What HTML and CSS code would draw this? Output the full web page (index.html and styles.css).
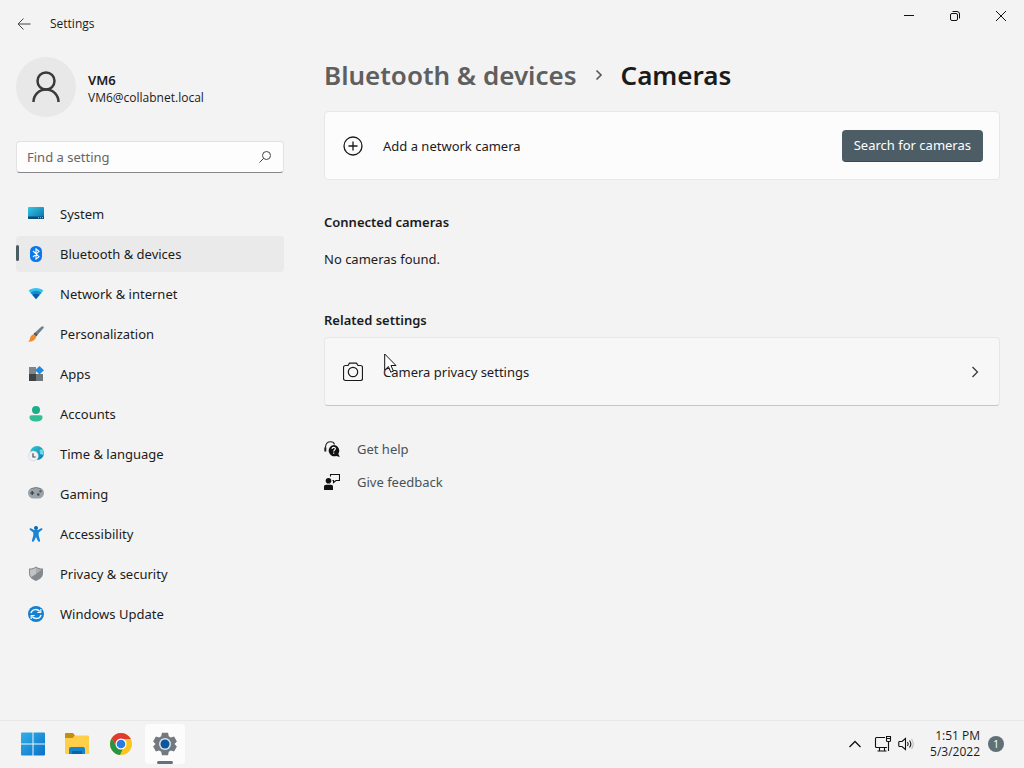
FILE: index.html
```html
<!DOCTYPE html>
<html lang="en">
<head>
  <meta charset="UTF-8" />
  <meta name="viewport" content="width=device-width, initial-scale=1.0" />
  <title>Settings</title>
  <link rel="stylesheet" href="styles.css">
</head>
<body>
  <header class="titlebar">
    <button class="back-btn" aria-label="Back">
      <svg width="14" height="14" viewBox="0 0 14 14" fill="none" stroke="#444" stroke-width="1"><path d="M13.500 7H1M6.500 1.500L1 7l5.500 5.500"/></svg>
    </button>
    <span class="app-name">Settings</span>
    <div class="window-controls">
      <button aria-label="Minimize"><svg width="12" height="12" viewBox="0 0 12 12" stroke="#111"><path d="M1 5.500h10"/></svg></button>
      <button aria-label="Restore"><svg width="12" height="12" viewBox="0 0 12 12" fill="none" stroke="#111"><rect x="1.500" y="3.500" width="7" height="7" rx="1.500"/><path d="M3.500 1.500H8a2.500 2.500 0 0 1 2.500 2.500v4.500"/></svg></button>
      <button aria-label="Close"><svg width="12" height="12" viewBox="0 0 12 12" stroke="#111"><path d="M1 1l10 10M11 1L1 11"/></svg></button>
    </div>
  </header>

  <div class="layout">
    <aside class="sidebar">
      <a class="profile" href="#">
        <span class="avatar">
          <svg width="32" height="34" viewBox="0 0 32 34" fill="none" stroke="#3a3a3a" stroke-width="2.500"><circle cx="16" cy="11" r="8.500"/><path d="M3.500 32C3.500 25 9 19.500 16 19.500S28.500 25 28.500 32"/></svg>
        </span>
        <span class="profile-text">
          <strong>VM6</strong>
          <span class="email">VM6@collabnet.local</span>
        </span>
      </a>

      <form class="search">
        <input type="search" aria-label="Find a setting" placeholder="Find a setting">
        <button type="button" aria-label="Search"><svg width="14" height="14" viewBox="0 0 14 14" fill="none" stroke="#444" stroke-width="1"><circle cx="8.500" cy="5.500" r="4"/><path d="M5.600 8.400L1.500 12.500"/></svg></button>
      </form>

      <nav class="nav">
        <a href="#">
          <svg width="16" height="16" viewBox="0 0 16 16"><defs><linearGradient id="sys" x2="1" y2="1"><stop stop-color="#34c9e2"/><stop offset="1" stop-color="#0a6cab"/></linearGradient></defs><rect y="1" width="16" height="12" rx="1" fill="url(#sys)"/><path d="M0 10.500h16V12a1 1 0 0 1-1 1H1a1 1 0 0 1-1-1z" fill="#0b4a74"/><path d="M10 11.700h1M12 11.700h1M14 11.700h1" stroke="#8ed7ec"/></svg>
          System
        </a>
        <a href="#" class="active" aria-current="page">
          <svg width="16" height="16" viewBox="0 0 16 16"><rect x="2" width="12" height="16" rx="5.500" fill="#0a78e8"/><path d="M5 5l6 5.700L8 13.200V2.800l3 2.500L5 11" fill="none" stroke="#fff" stroke-width="1.100"/></svg>
          Bluetooth &amp; devices
        </a>
        <a href="#">
          <svg width="16" height="16" viewBox="0 0 16 16"><path d="M.500 4.500C4.500 1 11.500 1 15.500 4.500L8 13z" fill="#35c3ee"/><path d="M2.500 6.700C5.500 4 10.500 4 13.500 6.700L8 13z" fill="#168bd2"/><path d="M4.500 9C6.500 7.300 9.500 7.300 11.500 9L8 13z" fill="#0b5ba8"/></svg>
          Network &amp; internet
        </a>
        <a href="#">
          <svg width="16" height="16" viewBox="0 0 16 16"><path d="M14.500.300c1 0 1.500.8 1.100 1.600L8.500 10 6 7.500 13.300.8z" fill="#6d7f8a"/><path d="M9.500 9L8 10.700 5.300 8.200 7 6.500z" fill="#4b5358"/><path d="M5.700 8.500c1.500.2 2.600 1.200 2.300 2.700-.5 3-4.200 4.700-7.900 4.400 1.700-1 1.600-2.400 2.200-4.100.5-1.700 1.800-3.100 3.400-3z" fill="#f08a2c"/></svg>
          Personalization
        </a>
        <a href="#">
          <svg width="16" height="16" viewBox="0 0 16 16"><path d="M1 1h7v7H1z" fill="#808589"/><path d="M1 8h7v7H1z" fill="#3e4346"/><path d="M8 8h7v7H8z" fill="#70767a"/><path d="M11.500 0L16 4.300 11.500 8.600 7 4.300z" fill="#218de2"/></svg>
          Apps
        </a>
        <a href="#">
          <svg width="16" height="16" viewBox="0 0 16 16"><circle cx="8" cy="4" r="4" fill="#1cae88"/><path d="M3.500 9.200h9c1.500 0 2 .8 2 2 0 3-3 4.300-6.500 4.300s-6.500-1.300-6.500-4.300c0-1.200.7-2 2-2z" fill="#32bd96"/></svg>
          Accounts
        </a>
        <a href="#">
          <svg width="16" height="16" viewBox="0 0 16 16"><defs><linearGradient id="globe" x2="1" y2="1"><stop stop-color="#35c9cf"/><stop offset="1" stop-color="#0a78b5"/></linearGradient></defs><circle cx="9" cy="7" r="7" fill="url(#globe)"/><path d="M11.500 4l2.800-1c1.400 2 1.800 4 1 6L12 8z" fill="#66dce0"/><circle cx="5.300" cy="10" r="5.300" fill="#dfe1e6"/><circle cx="5.300" cy="10" r="4.300" fill="#f2f2f5"/><path d="M5 7.200v3.800h2.700" fill="none" stroke="#4c4a53" stroke-width="1.200"/></svg>
          Time &amp; language
        </a>
        <a href="#">
          <svg width="16" height="16" viewBox="0 0 16 16"><rect y="1.500" width="16" height="11" rx="5.500" fill="#9aa2aa"/><path d="M3 3Q8 0 13 3" fill="none" stroke="#777f87"/><path d="M2.200 7h4M4.200 5v4" stroke="#35393d" stroke-width="1.200"/><circle cx="10.300" cy="8.500" r="1.200" fill="#42474c"/><circle cx="12.500" cy="5.300" r="1.200" fill="#5b6167"/></svg>
          Gaming
        </a>
        <a href="#">
          <svg width="16" height="16" viewBox="0 0 16 16"><path d="M3 2.300L6 4h4l3-1.700c1.200-.5 2 1 .9 1.800L10.700 6.500v3l1.400 4.900c.3 1.400-1.600 2-2.200.7L8 11l-1.900 4.100c-.6 1.300-2.500.7-2.200-.7l1.400-4.900v-3L2.100 4.100C1 3.300 1.800 1.800 3 2.300z" fill="#1685d6"/><circle cx="8" cy="2" r="2" fill="#0867ad"/></svg>
          Accessibility
        </a>
        <a href="#">
          <svg width="16" height="16" viewBox="0 0 16 16"><path d="M8 .500c2 1.500 4 2 7 2V7c0 4-2.500 6-7 8-4.500-2-7-4-7-8V2.500c3 0 5-.5 7-2z" fill="#85898d"/><path d="M8 1.700c2 1.200 3.700 1.700 6 1.800L8 8z" fill="#aaaeb1"/><path d="M8 1.700C6 2.900 4.300 3.400 2 3.500V7c0 1.500.4 2.900 1.300 4L8 8z" fill="#c1c4c6"/></svg>
          Privacy &amp; security
        </a>
        <a href="#">
          <svg width="16" height="16" viewBox="0 0 16 16"><circle cx="8" cy="8" r="8" fill="#1580cf"/><path d="M3 7.200C3.800 3.200 9 2.200 11.800 5.500M13 8.800c-.8 4-6 5-8.800 1.700" fill="none" stroke="#e9f7ff" stroke-width="1.400"/><path d="M12.800 3v3.500H9.300M3.200 13V9.500h3.500" fill="none" stroke="#e9f7ff" stroke-width="1.200"/></svg>
          Windows Update
        </a>
      </nav>
    </aside>

    <main class="content">
      <h1 class="breadcrumb">
        <a href="#">Bluetooth &amp; devices</a>
        <svg width="10" height="12" viewBox="0 0 10 12" fill="none" stroke="#555" stroke-width="1.600"><path d="M2.500 1.500L7 6l-4.500 4.500"/></svg>
        <span>Cameras</span>
      </h1>

      <div class="card">
        <svg width="20" height="20" viewBox="0 0 20 20" fill="none" stroke="#1a1a1a" stroke-width="1.300"><circle cx="10" cy="10" r="9"/><path d="M10 5.500v9M5.500 10h9"/></svg>
        <span class="card-label">Add a network camera</span>
        <button class="primary-btn">Search for cameras</button>
      </div>

      <section class="section">
        <h2>Connected cameras</h2>
        <p>No cameras found.</p>
      </section>

      <section class="section related">
        <h2>Related settings</h2>
        <a class="card card-link" href="#">
          <svg width="20" height="20" viewBox="0 0 20 20" fill="none" stroke="#1a1a1a" stroke-width="1.200"><path d="M2.500 3.500H5l1.500-2.400h7L15 3.500h2.500c1.200 0 2 .8 2 2v11c0 1.200-.8 2-2 2h-15c-1.200 0-2-.8-2-2v-11c0-1.200.8-2 2-2z"/><circle cx="10" cy="10" r="4.700"/></svg>
          <span class="card-label">Camera privacy settings</span>
          <svg width="12" height="12" viewBox="0 0 12 12" fill="none" stroke="#333" stroke-width="1.200"><path d="M3.500 1L8.500 6l-5 5"/></svg>
          <svg class="cursor" width="13" height="20" viewBox="0 0 13 20"><path d="M.700 1v16l3.700-3.500 2.400 5.700 2.600-1.100L7 12.500h5z" fill="#fff" stroke="#111"/></svg>
        </a>
      </section>

      <div class="help-links">
        <a href="#">
          <svg width="16" height="16" viewBox="0 0 16 16"><path d="M1.500 8V5.500C2 2.500 4 .8 6.500.8S10.200 2 10.500 3.500" fill="none" stroke="#222" stroke-width="1.100"/><path d="M.300 6.500h2v4h-2z" fill="#222"/><path d="M9.500 4a5.700 5.700 0 0 1 4.800 8.800l1.500 3.200-3.500-1A5.700 5.700 0 1 1 9.500 4z" fill="#111"/><path d="M8 8c0-2.200 3.400-2.100 3.400-.2 0 1.200-1.700 1.300-1.700 2.700M9.700 11.500v1.300" fill="none" stroke="#fff" stroke-width="1.100"/></svg>
          Get help
        </a>
        <a href="#">
          <svg width="16" height="16" viewBox="0 0 16 16"><circle cx="4.500" cy="6.800" r="2.800" fill="#111"/><path d="M0 16v-3c0-1.400.8-2.200 2.200-2.200h4.600C8.200 10.800 9 11.600 9 13v3z" fill="#111"/><path d="M6.500 2.500v-2h9v6h-3.500L9.500 8.500v-2H8.500" fill="none" stroke="#111" stroke-width="1.100"/></svg>
          Give feedback
        </a>
      </div>
    </main>
  </div>

  <footer class="taskbar">
    <div class="task-apps">
      <button aria-label="Start">
        <svg width="24" height="24" viewBox="0 0 24 24"><defs><linearGradient id="win" x2="1" y2="1"><stop stop-color="#32b0e9"/><stop offset="1" stop-color="#0871ca"/></linearGradient></defs><path d="M0 1.500Q0 .5 1 .5h10.500v11H0zM12.500.5H23q1 0 1 1v10H12.500zM0 12.500h11.500v11H1q-1 0-1-1zM12.500 12.500H24v10q0 1-1 1H12.500z" fill="url(#win)"/></svg>
      </button>
      <button aria-label="File Explorer">
        <svg width="24" height="24" viewBox="0 0 24 24"><path d="M0 2q0-1 1-1h7l2 2.500V8H0z" fill="#c58b12"/><path d="M0 6h7.500L10 3.500h13q1 0 1 1V21q0 1-1 1H1q-1 0-1-1z" fill="#ffcf4a"/><path d="M4 22v-5q0-2 2-2h12q2 0 2 2v5z" fill="#1784cf"/><path d="M7 19h10v3H7z" fill="#0864a8"/></svg>
      </button>
      <button aria-label="Google Chrome">
        <svg width="24" height="24" viewBox="0 0 24 24"><circle cx="12" cy="12" r="11" fill="#fbc520"/><path d="M2.500 6.500a11 11 0 0 1 19 0L22 7H12a5 5 0 0 0-4.700 7z" fill="#df3b30"/><path d="M2.500 6.500L7.700 14.500A5 5 0 0 0 14 16.600L11 23A11 11 0 0 1 2.500 6.500z" fill="#269447"/><circle cx="12" cy="12" r="5.500" fill="#fff"/><circle cx="12" cy="12" r="4.300" fill="#287be5"/></svg>
      </button>
      <button class="running" aria-label="Settings">
        <svg width="24" height="24" viewBox="0 0 24 24"><path d="M9 .8h6l.8 3.400 2 1.200 3.300-1 2.800 5-2.400 2.600 2.400 2.600-2.800 5-3.300-1-2 1.200-.8 3.400H9l-.8-3.400-2-1.200-3.300 1-2.800-5L2.500 12 .1 9.400l2.800-5 3.300 1 2-1.200z" fill="#73797e"/><circle cx="12" cy="12" r="6" fill="#d8e6ed"/><circle cx="12" cy="12" r="4.500" fill="#0c569c"/></svg>
      </button>
    </div>
    <div class="tray">
      <button aria-label="Show hidden icons"><svg width="14" height="16" viewBox="0 0 14 16" fill="none" stroke="#111" stroke-width="1.300"><path d="M1.500 11L7 5.500l5.500 5.500"/></svg></button>
      <button class="quick" aria-label="Network and volume">
        <svg width="18" height="18" viewBox="0 0 18 18" fill="none" stroke="#111" stroke-width="1.100"><path d="M11 2.500H2.500q-1 0-1 1v8q0 1 1 1h10.500M5.500 12.500V16M10.500 12.500V16M3.500 16h9M12.500 1.500h4v4q0 1-1 1h-2q-1 0-1-1zM14.500 6.500V16M12.500 3.500h4"/></svg>
        <svg width="16" height="16" viewBox="0 0 16 16" fill="none" stroke="#111" stroke-width="1.100"><path d="M1.500 5.500h2.500l3.500-3v11L4 10.500H1.500q-.7 0-.7-.7V6.200q0-.7.7-.7zM9.500 6q1.500 2 0 4M11.500 4.500q2.700 3.500 0 7"/><path d="M13.500 3q3.500 5 0 10" stroke="#bbb"/></svg>
      </button>
      <button class="clock"><time>1:51 PM</time><time>5/3/2022</time></button>
      <button class="badge" aria-label="1 notification">1</button>
    </div>
  </footer>
</body>
</html>
```
FILE: styles.css
```css
* {
  box-sizing: border-box;
}

body {
  margin: 0;
  min-height: 100vh;
  display: flex;
  flex-direction: column;
  background: #f3f3f3;
  color: #1b1b1b;
  font-family: "Noto Sans", "Open Sans", sans-serif;
  font-size: 13px;
  line-height: 20px;
}

a {
  color: inherit;
  text-decoration: none;
}

button {
  display: flex;
  align-items: center;
  justify-content: center;
  padding: 0;
  border: none;
  background: none;
  color: inherit;
  font: inherit;
}

svg {
  flex: none;
}

h1, h2, p {
  margin: 0;
}

/* title bar */
.titlebar {
  display: flex;
  align-items: center;
  height: 48px;
  padding-left: 8px;
}

.back-btn {
  width: 32px;
  height: 32px;
}

.app-name {
  margin-left: 10px;
  font-family: "Open Sans", sans-serif;
  font-size: 12px;
}

.window-controls {
  display: flex;
  align-self: flex-start;
  margin-left: auto;
}

.window-controls button {
  width: 46px;
  height: 32px;
}

.layout {
  flex: 1;
  display: grid;
  grid-template-columns: 268px 1fr;
  gap: 40px;
  padding: 7px 24px 24px 16px;
}

/* sidebar */
.profile {
  display: flex;
  align-items: center;
  gap: 12px;
  margin-top: 2px;
}

.avatar {
  display: flex;
  align-items: center;
  justify-content: center;
  width: 60px;
  height: 60px;
  border-radius: 50%;
  background: #e8e8e8;
}

.profile-text {
  display: flex;
  flex-direction: column;
  padding-top: 3px;
  line-height: 18px;
}

.profile-text strong {
  font-weight: 600;
}

.email {
  font-family: "Open Sans", sans-serif;
  font-size: 12px;
}

.search {
  display: flex;
  height: 32px;
  margin-top: 24px;
  border: 1px solid #e2e2e2;
  border-bottom-color: #868686;
  border-radius: 4px;
  background: #fdfdfd;
}

.search input {
  flex: 1;
  min-width: 0;
  padding: 0 10px;
  border: none;
  background: none;
  font: inherit;
}

.search input::placeholder {
  color: #666;
}

.search button {
  width: 36px;
}

.nav {
  display: flex;
  flex-direction: column;
  gap: 4px;
  margin-top: 23px;
}

.nav a {
  position: relative;
  display: flex;
  align-items: center;
  gap: 16px;
  height: 36px;
  padding-left: 12px;
  border-radius: 4px;
}

.nav .active {
  background: #eaeaea;
}

.nav .active::before {
  content: "";
  position: absolute;
  left: 0;
  top: 9px;
  width: 3px;
  height: 16px;
  border-radius: 2px;
  background: #4b5c64;
}

/* content */
.breadcrumb {
  display: flex;
  align-items: center;
  gap: 17px;
  font-size: 26px;
  font-weight: 600;
  line-height: 40px;
}

.breadcrumb a {
  color: #5f5f5f;
}

.card {
  position: relative;
  display: flex;
  align-items: center;
  gap: 20px;
  min-height: 69px;
  padding: 0 16px 0 18px;
  border: 1px solid #e7e7e7;
  border-radius: 4px;
  background: #fcfcfc;
}

.breadcrumb + .card {
  margin-top: 16px;
}

.card-label {
  flex: 1;
}

.card-link {
  margin-top: 7px;
  background: #f7f7f7;
  border-bottom-color: #c6c6c6;
  padding-right: 18px;
}

.primary-btn {
  height: 32px;
  padding: 0 12px;
  border-bottom: 1px solid #3b4a52;
  border-radius: 4px;
  background: #4d5d66;
  color: #fff;
}

.section {
  margin-top: 32px;
}

.section h2 {
  font-size: 13px;
  font-weight: 600;
}

.section p {
  margin-top: 17px;
}

.related {
  margin-top: 41px;
}

.cursor {
  position: absolute;
  left: 59px;
  top: 15px;
}

.help-links {
  display: flex;
  flex-direction: column;
  gap: 13px;
  margin-top: 33px;
  color: #46525a;
}

.help-links a {
  display: flex;
  align-items: center;
  gap: 17px;
}

/* taskbar */
.taskbar {
  display: flex;
  align-items: center;
  justify-content: space-between;
  height: 48px;
  padding: 0 20px 2px 13px;
  border-top: 1px solid #e8e8e8;
}

.task-apps {
  display: flex;
  gap: 4px;
}

.task-apps button {
  position: relative;
  width: 40px;
  height: 40px;
  border-radius: 4px;
}

.task-apps .running {
  background: #fcfcfc;
}

.running::after {
  content: "";
  position: absolute;
  left: 12px;
  bottom: 0;
  width: 16px;
  height: 3px;
  border-radius: 2px;
  background: #64717a;
}

.tray {
  display: flex;
  align-items: center;
  gap: 12px;
}

.quick {
  gap: 6px;
}

.clock {
  flex-direction: column;
  align-items: flex-end;
  margin-left: 4px;
  font-family: "Open Sans", sans-serif;
  font-size: 12px;
  line-height: 16px;
}

.badge {
  width: 16px;
  height: 16px;
  margin-left: -4px;
  border-radius: 50%;
  background: #5f7077;
  color: #fff;
  font-size: 10px;
}
```
